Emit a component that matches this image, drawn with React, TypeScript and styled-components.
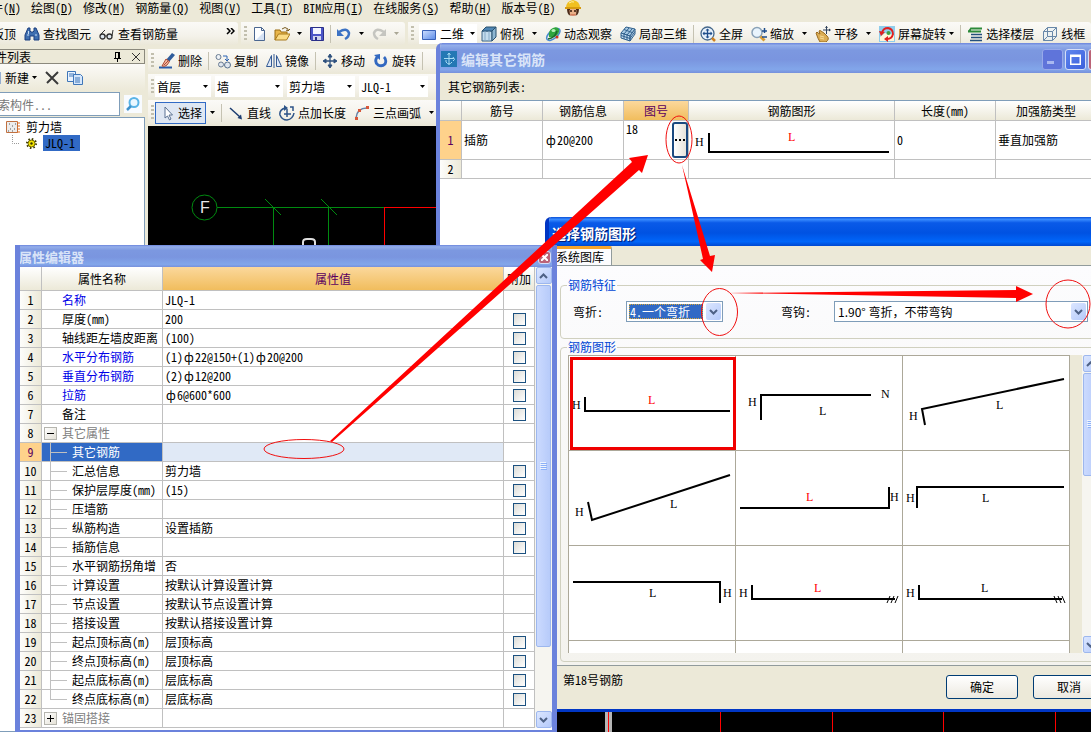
import React from 'react';
import styled, { createGlobalStyle, css } from 'styled-components';

const Global = createGlobalStyle`
  *, *::before, *::after { box-sizing: border-box; }
  body {
    margin: 0;
    background: #ece9d8;
    overflow: hidden;
  }
  body, button, input, select, table {
    font-family: "Noto Sans CJK SC", "Liberation Sans", sans-serif;
    font-size: 12px;
    line-height: 16px;
    color: #000;
    font-feature-settings: "hwid";
  }
  button, select, input { margin: 0; padding: 0; border: 0; background: none; border-radius: 0; }
  svg { display: block; flex: none; }
`;

/* ---------- main frame ---------- */

const Desktop = styled.div`
  position: relative;
  display: flex;
  flex-direction: column;
  min-height: 100vh;
  overflow: hidden;
  white-space: nowrap;
`;

const MenuBar = styled.nav`
  display: flex;
  gap: 10px;
  height: 22px;
  margin-left: -9px;
`;

const MenuItem = styled.button`
  height: 16px;
`;

const ToolbarRow = styled.div`
  display: flex;
  gap: 3px;
  margin-bottom: 4px;
`;

const Bar = styled.div<{ $gap?: number; $width?: number; $bleed?: boolean; $grow?: boolean; $height?: number }>`
  display: flex;
  align-items: center;
  gap: ${p => p.$gap ?? 8}px;
  height: ${p => p.$height ?? 23}px;
  flex: ${p => (p.$grow ? '1 0 auto' : 'none')};
  width: ${p => (p.$width ? `${p.$width}px` : 'auto')};
  margin-left: ${p => (p.$bleed ? '-8px' : '0')};
  padding-left: ${p => (p.$bleed ? '0' : '3px')};
  padding-right: 3px;
  border-radius: 0 3px 3px 0;
  background: linear-gradient(#fbfaf7, #f4f2ea 60%, #ebe8d9);
`;

const Grip = styled.span`
  width: 3px;
  height: 16px;
  margin-right: -3px;
  background: repeating-linear-gradient(#c2bfae 0 2px, transparent 2px 4px);
`;

const Sep = styled.span`
  width: 1px;
  height: 18px;
  margin: 0 -2px;
  background: #c5c2b2;
`;

const ToolButton = styled.button<{ $pressed?: boolean; $combo?: boolean }>`
  display: inline-flex;
  align-items: center;
  gap: 3px;
  height: 20px;
  ${p => p.$pressed && css`
    height: 22px;
    margin: 0 -4px;
    padding: 0 3px;
    border: 1px solid #316ac5;
    background: #dfe7f3;
  `}
  ${p => p.$combo && css`
    margin-right: -4px;
    padding: 0 2px;
    background: #fff;
  `}
`;

const Push = styled.span`
  flex: 1;
`;

const Workspace = styled.div`
  display: flex;
  flex: 1;
`;

const Dock = styled.aside`
  display: flex;
  flex-direction: column;
  width: 161px;
  margin-left: -16px;
  margin-right: 3px;
`;

const DockTitle = styled.div`
  display: flex;
  align-items: center;
  gap: 10px;
  height: 15px;
  padding: 0 4px 0 10px;
  border: 1px solid #8b897d;
`;

const DockTools = styled.div`
  display: flex;
  align-items: center;
  gap: 7px;
  height: 27px;
  padding-left: 2px;
  background: linear-gradient(#fbfaf7, #ece9d8);
`;

const SearchRow = styled.div`
  display: flex;
  align-items: center;
  gap: 4px;
  height: 26px;
`;

const SearchInput = styled.input`
  width: 136px;
  height: 24px;
  padding-left: 1px;
  border: 1px solid #7f9db9;
  background: #fff;
  &::placeholder { color: #777; }
`;

const SearchButton = styled.button`
  padding: 1px;
  background: #f8fbff;
`;

const Tree = styled.ul`
  flex: 1;
  margin: 0;
  padding: 1px 0 0 21px;
  list-style: none;
  background: #fff;
  border: 1px solid #7f9db9;
`;

const TreeRow = styled.li<{ $child?: boolean }>`
  display: flex;
  align-items: center;
  gap: 6px;
  height: 16px;
  padding-left: ${p => (p.$child ? '6px' : '0')};
`;

const TreeSelected = styled.span`
  padding: 0 5px 0 2px;
  background: #316ac5;
`;

const Main = styled.main`
  display: flex;
  flex: 1;
  flex-direction: column;
  gap: 1px;
`;

const Drawing = styled.div`
  flex: 1;
  min-height: 300px;
  background: #000;
  svg { width: 100%; height: 100%; }
`;

const ComboBox = styled.span<{ $width: number }>`
  display: flex;
  align-items: center;
  width: ${p => p.$width}px;
  height: 21px;
  padding: 0 3px 0 2px;
  background: #fff;
`;

const PlainSelect = styled.select`
  flex: 1;
  min-width: 0;
  height: 18px;
  appearance: none;
`;

/* ---------- windows ---------- */

const Window = styled.section<{ $active?: boolean }>`
  position: absolute;
  border-style: solid;
  border-color: ${p => (p.$active ? '#0036c4' : '#6b82dc')};
  border-top-left-radius: 6px;
  overflow: hidden;
`;

const EditWindow = styled(Window)`
  top: 43px;
  left: 436px;
  right: -23px;
  height: 560px;
  border-width: 0 4px 4px;
  background: #ece9d8;
`;

const PickWindow = styled(Window)`
  top: 217px;
  left: 545px;
  right: -23px;
  border-width: 0 4px 3px;
  background: #ece9d8;
`;

const PropWindow = styled(Window)`
  top: 245px;
  left: 15px;
  width: 542px;
  border-width: 0 5px 3px;
  border-radius: 0;
  background: #fff;
`;

const TitleBar = styled.header<{ $active?: boolean; $height: number; $size: number; $inset?: number }>`
  display: flex;
  align-items: center;
  gap: 2px;
  height: ${p => p.$height}px;
  margin: 0 -5px;
  padding: 2px 6px 0 ${p => p.$inset ?? 6}px;
  font-size: ${p => p.$size}px;
  font-weight: bold;
  color: ${p => (p.$active ? '#fff' : '#d9e4f8')};
  text-shadow: ${p => (p.$active ? '1px 1px 1px #00156b' : 'none')};
  background: ${p =>
    p.$active
      ? 'linear-gradient(#0a50d8, #3a8cff 8%, #0a5ae8 20%, #0052e2 55%, #0066fa 85%, #0048d0)'
      : 'linear-gradient(#6a84dc, #94aeea 8%, #7c98e0 25%, #7a95df 55%, #82a6ea 88%, #7690dc)'};
`;

const TitleText = styled.h2`
  flex: 1;
  margin: 0;
  padding-left: 2px;
  font-size: inherit;
  font-weight: bold;
  line-height: 18px;
`;

const CaptionButton = styled.button<{ $tone: 'dim' | 'blue' | 'red'; $small?: boolean }>`
  display: grid;
  place-items: center;
  width: ${p => (p.$small ? 13 : 21)}px;
  height: ${p => (p.$small ? 13 : 21)}px;
  border: 1px solid ${p => (p.$tone === 'dim' ? '#97a9ea' : '#d5def8')};
  border-radius: 3px;
  background: ${p => ({ dim: '#5f74da', blue: 'linear-gradient(135deg, #5f86ee, #3b5fdc)', red: '#bb6377' })[p.$tone]};
`;

const ListLabel = styled.p`
  margin: 0;
  padding: 6px 8px 5px;
  height: 27px;
`;

const ListArea = styled.div`
  height: 100%;
  border-top: 1px solid #7f9db9;
  background: #fff;
`;

const Grid = styled.table`
  table-layout: fixed;
  border-collapse: separate;
  border-spacing: 0;
`;

const HeadCell = styled.th<{ $hot?: boolean; $height: number }>`
  height: ${p => p.$height}px;
  padding: 0;
  overflow: hidden;
  font-weight: normal;
  border-right: 1px solid #c0c0c0;
  border-bottom: 1px solid #c0c0c0;
  color: ${p => (p.$hot ? '#5a0060' : '#000')};
  background: ${p => (p.$hot ? 'linear-gradient(#fbd89c, #f1bd5d)' : 'linear-gradient(#fff, #ece9d8)')};
`;

const RowHead = styled.th<{ $hot?: boolean }>`
  padding: 0;
  font-weight: normal;
  border-right: 1px solid #c0c0c0;
  border-bottom: 1px solid #c0c0c0;
  color: ${p => (p.$hot ? '#5a0060' : '#000')};
  background: ${p => (p.$hot ? '#fed28b' : 'linear-gradient(90deg, #fdfdfb, #ece9d8)')};
`;

const Cell = styled.td<{ $height: number; $tint?: string; $pad?: number }>`
  height: ${p => p.$height}px;
  padding: 0 0 0 ${p => p.$pad ?? 2}px;
  overflow: hidden;
  border-right: 1px solid #c0c0c0;
  border-bottom: 1px solid #c0c0c0;
  background: ${p => p.$tint ?? '#fff'};
`;

const CheckCell = styled(Cell)`
  padding: 1px 0 0;
  text-align: center;
`;

const Check = styled.input`
  display: block;
  appearance: none;
  width: 13px;
  height: 13px;
  margin: 0 auto;
  border: 1px solid #1c5180;
  background: linear-gradient(135deg, #dcdcd7, #fff);
`;

const Grade = styled.span`
  display: inline-block;
  width: 12px;
  text-align: center;
`;

const NumberEdit = styled.div`
  display: flex;
  justify-content: space-between;
  height: 38px;
`;

const DotsButton = styled.button`
  display: grid;
  place-items: center;
  width: 16px;
  height: 36px;
  margin-top: 1px;
  border: 2px solid #1b4a80;
  border-radius: 3px;
  background: linear-gradient(90deg, #fff, #e6e3da);
`;

const PropBody = styled.div`
  display: flex;
  padding-bottom: 2px;
`;

const NameLine = styled.div<{ $kind: Kind; $selected?: boolean; $key?: boolean; $last?: boolean }>`
  position: relative;
  display: flex;
  align-items: center;
  gap: 5px;
  height: 18px;
  padding-left: ${p => ({ plain: 20, child: 30, group: 2 })[p.$kind]}px;
  color: ${p => (p.$selected ? '#fff' : p.$key ? '#0000e8' : p.$kind === 'group' ? '#808080' : '#000')};
  ${p => p.$kind === 'child' && css`
    &::before {
      content: '';
      position: absolute;
      left: 8px;
      top: -1px;
      height: ${p.$last ? '10px' : '19px'};
      border-left: 1px solid #c0c0c0;
    }
    &::after {
      content: '';
      position: absolute;
      left: 8px;
      top: 9px;
      width: 17px;
      border-top: 1px solid #c0c0c0;
    }
  `}
`;

const Expander = styled.button`
  display: grid;
  place-items: center;
  width: 13px;
  height: 13px;
  border: 1px solid #b5b5ae;
  background: linear-gradient(135deg, #fff, #e4e1d6);
`;

const ScrollTrack = styled.div`
  display: flex;
  flex-direction: column;
  align-items: center;
  gap: 1px;
  width: 17px;
  flex: none;
  background: #f6f5f0;
`;

const ScrollButton = styled.button`
  display: grid;
  place-items: center;
  width: 16px;
  height: 17px;
  flex: none;
  border: 1px solid #9db7ee;
  border-radius: 2px;
  background: linear-gradient(135deg, #dbe6ff, #b5cafa);
`;

const ScrollThumb = styled.div<{ $share: number }>`
  display: grid;
  place-items: center;
  flex: ${p => p.$share} 0 0;
  width: 15px;
  border: 1px solid #9db7ee;
  border-radius: 2px;
  background: linear-gradient(90deg, #cbdafe, #b7cbfa);
`;

const ScrollRest = styled.div<{ $share: number }>`
  flex: ${p => p.$share} 0 0;
`;

const TabStrip = styled.div`
  display: flex;
  height: 19px;
`;

const Tab = styled.button`
  width: 63px;
  padding: 0 0 0 7px;
  text-align: left;
  border-top: 3px solid #f5a52c;
  border-right: 1px solid #919b9c;
  border-radius: 2px 2px 0 0;
  background: #fcfcfe;
`;

const TabPanel = styled.div`
  display: flex;
  flex-direction: column;
  gap: 1px;
  padding: 12px 4px 3px 11px;
  border-top: 1px solid #919b9c;
  border-bottom: 1px solid #919b9c;
  background: linear-gradient(#fcfcfe, #f4f3ee);
`;

const Group = styled.fieldset`
  margin: 0;
  min-width: 0;
  padding: 0;
  border: 1px solid #d0d0bf;
  border-radius: 4px;
  legend {
    height: 14px;
    line-height: 14px;
    margin-left: 6px;
    padding: 0 1px;
    color: #0046d5;
  }
`;

const FieldRow = styled.div`
  display: flex;
  gap: 58px;
  padding: 9px 0 16px 12px;
`;

const Field = styled.label`
  display: flex;
  align-items: center;
  gap: 23px;
`;

const XpSelectBox = styled.span<{ $width: number }>`
  display: flex;
  align-items: center;
  gap: 3px;
  width: ${p => p.$width}px;
  height: 21px;
  padding: 1px;
  border: 1px solid #7f9db9;
  background: #fff;
`;

const XpSelect = styled.select<{ $focused?: boolean }>`
  flex: 1;
  min-width: 0;
  height: 15px;
  margin-left: 1px;
  padding-left: 1px;
  line-height: 15px;
  appearance: none;
  ${p => p.$focused && css`
    color: #fff;
    background: #316ac5;
    outline: 1px dotted #d8a838;
    outline-offset: -1px;
  `}
  ${p => !p.$focused && css`
    font-feature-settings: normal;
  `}
`;

const DropGlyph = styled.span`
  display: grid;
  place-items: center;
  width: 15px;
  height: 17px;
  border-radius: 2px;
  background: linear-gradient(135deg, #dbe6ff, #b5cafa);
`;

const Gallery = styled.div`
  display: flex;
  gap: 12px;
  height: 298px;
  margin: 1px 0 8px 7px;
  overflow: hidden;
  background: #ece9d8;
`;

const ShapeGrid = styled.div`
  display: grid;
  grid-template-columns: repeat(3, 167px);
  grid-auto-rows: 95px;
  border-left: 1px solid #aca899;
  border-top: 1px solid #aca899;
`;

const ShapeCell = styled.button<{ $selected?: boolean }>`
  position: relative;
  border-right: 1px solid #aca899;
  border-bottom: 1px solid #aca899;
  background: #fff;
  ${p => p.$selected && css`
    &::after {
      content: '';
      position: absolute;
      inset: 1px -1px 0 1px;
      border: 3px solid #f00000;
    }
  `}
`;

const Footer = styled.footer`
  display: flex;
  gap: 15px;
  height: 43px;
  padding: 6px 5px 0 14px;
`;

const FooterText = styled.p`
  flex: 1;
  margin: 0;
`;

const PushButton = styled.button`
  width: 72px;
  height: 24px;
  margin-top: 3px;
  border: 1px solid #003c74;
  border-radius: 3px;
  background: linear-gradient(#fff, #ece9e0);
`;

const Marks = styled.svg`
  position: absolute;
  inset: 0;
  width: 100%;
  height: 100%;
  pointer-events: none;
`;

/* ---------- icons ---------- */

const Icon = ({ children }: { children: React.ReactNode }) => (
  <svg width="16" height="16" viewBox="0 0 16 16" fill="none" aria-hidden="true">{children}</svg>
);

const Tri = ({ dim }: { dim?: boolean }) => (
  <svg width="5" height="3" viewBox="0 0 5 3" aria-hidden="true"><path d="M0 0h5L2.500 3z" fill={dim ? '#aaa795' : '#000'} /></svg>
);

const Chevron = ({ up }: { up?: boolean }) => (
  <svg width="9" height="6" viewBox="0 0 9 6" fill="none" aria-hidden="true">
    <path d={up ? 'M1 5l3.500-3.500L8 5' : 'M1 1l3.500 3.500L8 1'} stroke="#4d6185" strokeWidth="2" />
  </svg>
);

const Worker = () => (
  <Icon>
    <circle cx="8" cy="10.500" r="5" fill="#e8b088" />
    <path d="M2 8q0 7 3 7.500L4.500 10h7l-.5 5.500q3-.5 3-7.500z" fill="#4a2a18" />
    <path d="M5 9h6v4q-3 3-6 0z" fill="#e8b088" />
    <path d="M1 8Q1 1 8 0q7 1 7 8z" fill="#f0c020" />
    <path d="M0 7h16v2H0z" fill="#d89c10" />
    <path d="M4 3q3-2 5-1" stroke="#fff3a0" />
    <path d="M6 10v2M10 10v2" stroke="#301808" strokeWidth="1.500" />
    <path d="M5 15h6" stroke="#c05030" />
  </Icon>
);
const Binoculars = () => (
  <Icon>
    <path d="M4 2h2v3l1 1h2l1-1V2h2l3 7v5h-5v-4H6v4H1V9z" fill="#3f6fb0" stroke="#1b3f80" />
    <path d="M3 9h2M11 9h2M4.500 5v3" stroke="#c8dcf5" />
  </Icon>
);
const Glasses = () => (
  <Icon>
    <circle cx="3.500" cy="10.500" r="2.500" stroke="#333" strokeWidth="1.300" fill="#dde6ee" />
    <circle cx="10.500" cy="10.500" r="2.500" stroke="#333" strokeWidth="1.300" fill="#dde6ee" />
    <path d="M6 10h2M13 10l1-6M2 8l4-4" stroke="#333" />
  </Icon>
);
const NewFile = () => (
  <Icon>
    <path d="M3.500 1.500h7l3 3v10h-10z" fill="#fdfeff" stroke="#4a6690" />
    <path d="M10.500 1.500v3h3" stroke="#4a6690" />
    <path d="M5 14l8-8v8z" fill="#d5e2f4" />
  </Icon>
);
const OpenFolder = () => (
  <Icon>
    <path d="M1 14V4h5l1 2h6v3H5z" fill="#e9b64a" stroke="#9a6c12" />
    <path d="M1 14L4.500 8H16l-3.500 6z" fill="#fbdc85" stroke="#a87a1c" />
    <path d="M8 3q3-3 6 0v2M14 5l-2-1M14 5l2-2" stroke="#7a5c20" />
  </Icon>
);
const Save = () => (
  <Icon>
    <path d="M1.500 1.500h13v13h-12l-1-1z" fill="#4b55c8" stroke="#2a2f88" />
    <path d="M4 2h8v6H4z" fill="#f3f5ff" />
    <path d="M4 10h8v4H4z" fill="#cfd4ec" />
    <path d="M6 11h2v3H6z" fill="#2a2f88" />
  </Icon>
);
const Undo = () => (
  <Icon>
    <path d="M3 6q8-5 10 1 0 4-4 6" stroke="#3c72c4" strokeWidth="2.500" />
    <path d="M1 3v7h7z" fill="#3c72c4" />
  </Icon>
);
const Redo = () => (
  <Icon>
    <path d="M13 6Q5 1 3 7q0 4 4 6" stroke="#c5c5c0" strokeWidth="2.500" />
    <path d="M15 3v7H8z" fill="#c5c5c0" />
  </Icon>
);
const Flat = () => (
  <Icon>
    <path d="M1.500 4.500h13v9h-13z" fill="url(#flat)" stroke="#3a62b8" />
    <defs><linearGradient id="flat" x2="1" y2="1"><stop stopColor="#cfdfff" /><stop offset="1" stopColor="#5b8be8" /></linearGradient></defs>
  </Icon>
);
const TopView = () => (
  <Icon>
    <path d="M1 5h10v10H1z" fill="#c4ddee" stroke="#3b6384" />
    <path d="M1 5l4-4h10l-4 4z" fill="#4f86b4" stroke="#28506f" />
    <path d="M11 5l4-4v10l-4 4z" fill="#8db6d2" stroke="#28506f" />
    <path d="M4 5v10M8 5v10" stroke="#86aac6" />
  </Icon>
);
const Orbit = () => (
  <Icon>
    <ellipse cx="8" cy="8.500" rx="8" ry="4" transform="rotate(-40 8 8)" stroke="#4a8ad0" strokeWidth="1.500" />
    <path d="M4 11Q3 4 8 2q4-2 6 1 1 4-3 7-3 2-7 1z" fill="#2fa53e" />
    <path d="M3 13q7-1 9-8" stroke="#1b6a2c" strokeWidth="1.500" />
    <ellipse cx="8.500" cy="4.500" rx="2" ry="1.500" fill="#b8f0b8" />
    <circle cx="12" cy="11" r="1.500" fill="#d03020" />
  </Icon>
);
const Local3d = () => (
  <Icon>
    <path d="M1 7l5-6 9 2-5 7z" fill="#a8cae4" stroke="#2f5f8c" />
    <path d="M1 7v5l9 3V10zM10 15l5-7V3l-5 7z" fill="#c3dcf0" stroke="#2f5f8c" />
    <path d="M4 3.500l8 3M9 2L4 8v5M12 3L7 9v5M1 9.500l9 3 5-7" stroke="#2f5f8c" />
  </Icon>
);
const FitAll = () => (
  <Icon>
    <circle cx="7.500" cy="7.500" r="6.500" fill="#e8f2fc" stroke="#46688c" strokeWidth="1.300" />
    <path d="M7.500 3v9M3 7.500h9" stroke="#1f4e8c" strokeWidth="1.300" />
    <path d="M5.500 4.500l2-2 2 2zM5.500 10.500l2 2 2-2zM4.500 5.500l-2 2 2 2zM10.500 5.500l2 2-2 2z" fill="#1f4e8c" />
    <path d="M12 12l3 3" stroke="#d08020" strokeWidth="2.500" />
  </Icon>
);
const Zoom = () => (
  <Icon>
    <circle cx="6" cy="6.500" r="5" fill="#e9f4fd" stroke="#8aa2b8" strokeWidth="1.500" />
    <path d="M9.500 10.500l4 4" stroke="#d89a30" strokeWidth="3" />
    <path d="M11 5h5M13.500 2v5M11 11h5" stroke="#1c4c8c" strokeWidth="1.500" />
  </Icon>
);
const Pan = () => (
  <Icon>
    <path d="M1 7q1-2 2 0l2 1-1-3q1-1 2 0l3 2 3 3q3 3-1 6H5q-2-3-4-9z" fill="#dcae55" stroke="#9b6c20" />
    <path d="M5 10l4 1M5 12l4 1" stroke="#f8dc98" />
    <path d="M11.500 0v8M8 4h7" stroke="#30425c" />
    <path d="M10 2l1.500-2L13 2zM14 2.500L16 4l-2 1.500z" fill="#30425c" />
  </Icon>
);
const ScreenSpin = () => (
  <Icon>
    <path d="M0 0h16v16H0z" fill="#8fcdec" />
    <path d="M1 11l5-4 9 2v6H1z" fill="#fff5d8" />
    <circle cx="9.500" cy="7" r="2" fill="#3fa040" />
    <path d="M3 7q1-5 6-5 5 1 5 6-1 5-6 5" stroke="#e02020" strokeWidth="1.800" />
    <path d="M0 5l2 5 4-4zM9 10v6l-4-3z" fill="#e02020" />
  </Icon>
);
const Floors = () => (
  <Icon>
    <path d="M4 2.500h11M1 5.500h13" stroke="#2c8a3a" strokeWidth="2" />
    <path d="M4 8.500h11M4 11.500h11M3 14.500h12" stroke="#24507c" strokeWidth="1.500" />
    <path d="M1 5l3-4v4z" fill="#2c8a3a" />
  </Icon>
);
const Wire = () => (
  <Icon>
    <path d="M1.500 5.500l4-4h9v9l-4 4h-9zM1.500 5.500h9v9M10.500 5.500l4-4M5.500 1.500v9h9M1.500 14.500l4-4" stroke="#6787a8" fill="#e6eff8" fillOpacity=".5" />
  </Icon>
);
const Brush = () => (
  <Icon>
    <path d="M0 14.500h13" stroke="#2b5ca8" strokeWidth="2" />
    <path d="M13 0l3 2-6 7-3-2z" fill="#2f5c9c" />
    <path d="M7 6l3.500 2.500L8 12q-2 2-5 1z" fill="#f0b8a0" stroke="#b04a34" />
    <path d="M5 12l4-4" stroke="#b04a34" />
  </Icon>
);
const CopyShape = () => (
  <Icon>
    <circle cx="3.500" cy="4" r="2.500" stroke="#6a7c92" fill="#eef2f6" />
    <circle cx="6" cy="11.500" r="2.500" stroke="#6a7c92" fill="#dfe6ee" />
    <circle cx="12.500" cy="12" r="3" stroke="#56708e" fill="#dfe6ee" />
    <path d="M8 3h4v4M10 6l2 2 2-2" stroke="#2b62b4" />
  </Icon>
);
const Mirror = () => (
  <Icon>
    <path d="M5.500 2.500v11h-5zM10.500 2.500v11h5z" fill="#dfe9f7" stroke="#345a94" />
    <path d="M8 1v14" stroke="#345a94" />
  </Icon>
);
const Move = () => (
  <Icon>
    <path d="M8 2v12M2 8h12" stroke="#2f517e" strokeWidth="1.300" />
    <path d="M6 4l2-3 2 3zM6 12l2 3 2-3zM4 6L1 8l3 2zM12 6l3 2-3 2z" fill="#2f517e" stroke="#2f517e" />
  </Icon>
);
const Rotate = () => (
  <Icon>
    <path d="M4 4q-3 5 1 8 4 2 7-1 2-4-1-7" stroke="#3268c0" strokeWidth="2.800" />
    <path d="M1 2l6-1v6z" fill="#3268c0" />
  </Icon>
);
const Pointer = () => (
  <Icon><path d="M6 2v11l2.500-2 2 4 1.500-1-2-4h3.500z" fill="#fff" stroke="#5a7192" /></Icon>
);
const Diagonal = () => (
  <Icon>
    <path d="M2 3l10 9" stroke="#1c3c70" strokeWidth="1.500" />
    <path d="M14 14.500L9.500 13 13 9.500z" fill="#1c3c70" />
  </Icon>
);
const PointLen = () => (
  <Icon>
    <path d="M6 3Q0 5 1 10q2 5 7 5 6-1 7-7" stroke="#2c5388" strokeWidth="1.500" />
    <path d="M8 4v8M5 9h7M11 2h3v4" stroke="#2c5388" strokeWidth="1.500" />
    <path d="M5 0l4 3-4 3z" fill="#2c5388" />
  </Icon>
);
const Arc = () => (
  <Icon>
    <path d="M2 13Q3 3 13 3" stroke="#6682a6" strokeWidth="1.500" />
    <path d="M1 12h3v3H1zM4 4h3v3H4zM12 1h3v3h-3z" fill="#d8573a" />
  </Icon>
);
const Cross = () => (
  <Icon><path d="M2 2l12 12M14 2L3 13" stroke="#3a3a3a" strokeWidth="2" /></Icon>
);
const Pages = () => (
  <Icon>
    <path d="M.5 1.500h8v10h-8z" fill="#eaf3ff" stroke="#3f76b8" />
    <path d="M6.500 4.500h7l2 2v8h-9z" fill="#d5e6fb" stroke="#3f76b8" />
    <path d="M2 4h5M2 6h4M8 8h5M8 10h5M8 12h5" stroke="#3f76b8" />
  </Icon>
);
const Pin = () => (
  <svg width="9" height="10" viewBox="0 0 9 10" fill="none" aria-hidden="true">
    <path d="M2.500 1v5M2 .5h5M6 1v5M1 6.500h7M4.500 7v3" stroke="#000" />
    <path d="M5 1h2v5H5z" fill="#000" />
  </svg>
);
const Close = () => (
  <svg width="8" height="8" viewBox="0 0 8 8" aria-hidden="true"><path d="M0 0l8 8M8 0L0 8" stroke="#333" /></svg>
);
const Lens = () => (
  <Icon>
    <circle cx="9" cy="6.500" r="4.500" stroke="#5ab4e6" strokeWidth="2" fill="#eaf7ff" />
    <path d="M6 10l-4 4" stroke="#3f92cc" strokeWidth="2.500" />
  </Icon>
);
const WallIcon = () => (
  <svg width="14" height="14" viewBox="0 0 14 14" fill="none" aria-hidden="true">
    <path d="M.5 1.500h11v11H.5z" fill="#ececec" stroke="#c07040" />
    <path d="M3 4h1M6 6h1M9 4h1M4 9h1M8 9h1M2 11h1M6 11h1" stroke="#555" />
    <path d="M11 3h3M11 6h3M11 9h3M11 12h3" stroke="#e06a1c" />
  </svg>
);
const Gear = () => (
  <svg width="11" height="11" viewBox="0 0 11 11" fill="none" aria-hidden="true">
    <circle cx="5.500" cy="5.500" r="4.500" stroke="#3c3800" strokeWidth="2" strokeDasharray="1.500 2" />
    <circle cx="5.500" cy="5.500" r="3.500" fill="#f4e400" stroke="#6a6200" />
    <circle cx="5.500" cy="5.500" r="1.200" fill="#3c3800" />
  </svg>
);
const AppBadge = () => (
  <svg width="16" height="16" viewBox="0 0 16 16" fill="none" aria-hidden="true">
    <path d="M0 0h16v16H0z" fill="#2478b4" />
    <path d="M8 2v12M3 7.500h10M5 11q3 4 6 0M5 11V9M6.500 4L8 2l1.500 2M12 6q3 3 0 4" stroke="#a8dcf4" />
  </svg>
);
const ThumbLines = () => (
  <svg width="7" height="8" viewBox="0 0 7 8" aria-hidden="true">
    <path d="M0 .5h6M0 2.500h6M0 4.500h6M0 6.500h6" stroke="#eef4fe" />
    <path d="M1 1.500h6M1 3.500h6M1 5.500h6M1 7.500h6" stroke="#8cb0f8" />
  </svg>
);

/* ---------- data ---------- */

type Kind = 'plain' | 'child' | 'group';
type Row = { name: string; value?: string; kind?: Kind; key?: boolean; check?: boolean; open?: boolean };

const rows: Row[] = [
  { name: '名称', value: 'JLQ-1', key: true },
  { name: '厚度(mm)', value: '200', check: true },
  { name: '轴线距左墙皮距离', value: '(100)', check: true },
  { name: '水平分布钢筋', value: '(1)ф22@150+(1)ф20@200', key: true, check: true },
  { name: '垂直分布钢筋', value: '(2)ф12@200', key: true, check: true },
  { name: '拉筋', value: 'ф6@600*600', key: true, check: true },
  { name: '备注', check: true },
  { name: '其它属性', kind: 'group', open: true },
  { name: '其它钢筋', kind: 'child' },
  { name: '汇总信息', value: '剪力墙', kind: 'child', check: true },
  { name: '保护层厚度(mm)', value: '(15)', kind: 'child', check: true },
  { name: '压墙筋', kind: 'child', check: true },
  { name: '纵筋构造', value: '设置插筋', kind: 'child', check: true },
  { name: '插筋信息', kind: 'child', check: true },
  { name: '水平钢筋拐角增', value: '否', kind: 'child' },
  { name: '计算设置', value: '按默认计算设置计算', kind: 'child' },
  { name: '节点设置', value: '按默认节点设置计算', kind: 'child' },
  { name: '搭接设置', value: '按默认搭接设置计算', kind: 'child' },
  { name: '起点顶标高(m)', value: '层顶标高', kind: 'child', check: true },
  { name: '终点顶标高(m)', value: '层顶标高', kind: 'child', check: true },
  { name: '起点底标高(m)', value: '层底标高', kind: 'child', check: true },
  { name: '终点底标高(m)', value: '层底标高', kind: 'child', check: true },
  { name: '锚固搭接', kind: 'group' },
];
const SELECTED_ROW = 8;

type Mark = [text: string, x: number, y: number, red?: boolean];
type Shape = { path: string; hatch?: string; marks: Mark[] };

const shapes: Shape[] = [
  { path: 'M16 41V55H161', marks: [['H', 3, 53], ['L', 79, 48, true]] },
  { path: 'M25 64V39H135', marks: [['H', 12, 50], ['N', 145, 42], ['L', 83, 59]] },
  { path: 'M22 69L19 53L161 23', marks: [['H', 6, 64], ['L', 93, 53]] },
  { path: 'M19 51L23 69L161 24', marks: [['H', 6, 65], ['L', 101, 57]] },
  { path: 'M4 57H153V36', marks: [['L', 70, 50, true], ['H', 154, 50]] },
  { path: 'M14 57V36H161', marks: [['H', 3, 51], ['L', 79, 51]] },
  { path: 'M4 36H151V57', marks: [['L', 80, 51], ['H', 154, 51]] },
  { path: 'M16 39V53H159', hatch: 'M151 57l3-7M155 57l3-7M159 57l3-7', marks: [['H', 3, 51], ['L', 78, 46, true]] },
  { path: 'M16 39V53H159', hatch: 'M151 50l3 7M155 50l3 7M159 50l3 7', marks: [['H', 3, 51], ['L', 78, 46]] },
];

const markFont = '"Liberation Serif", serif';

const ShapeDrawing = ({ shape, width, height }: { shape: Shape; width: number; height: number }) => (
  <svg width={width} height={height} viewBox={`0 0 ${width} ${height}`} fill="none">
    <path d={shape.path} stroke="#000" strokeWidth="2" />
    {shape.hatch && <path d={shape.hatch} stroke="#000" />}
    {shape.marks.map(([t, x, y, red]) => (
      <text key={t} x={x} y={y} fontFamily={markFont} fontSize="12" fill={red ? '#f00' : '#000'}>{t}</text>
    ))}
  </svg>
);

/* Steel grade signs take a full character cell. */
const Spec = ({ text = '' }: { text?: string }) => (
  <>{text.split('ф').map((part, i) => <React.Fragment key={i}>{i > 0 && <Grade>ф</Grade>}{part}</React.Fragment>)}</>
);

const Menus = ['件(N)', '绘图(D)', '修改(M)', '钢筋量(Q)', '视图(V)', '工具(T)', 'BIM应用(I)', '在线服务(S)', '帮助(H)', '版本号(B)'];

const MenuLabel = ({ text }: { text: string }) => {
  const i = text.indexOf('(') + 1;
  return <>{text.slice(0, i)}<u>{text[i]}</u>{text.slice(i + 1)}</>;
};

/* ---------- sections ---------- */

const TopBars = () => (
  <>
    <MenuBar>
      {Menus.map(m => <MenuItem key={m}><MenuLabel text={m} /></MenuItem>)}
      <Worker />
    </MenuBar>
    <ToolbarRow>
      <Bar $bleed $width={246}>
        <ToolButton>板顶</ToolButton>
        <ToolButton><Binoculars />查找图元</ToolButton>
        <ToolButton><Glasses />查看钢筋量</ToolButton>
        <Push />
        <svg width="9" height="12" viewBox="0 0 9 12" fill="none"><path d="M1 0l3 3-3 3M5 0l3 3-3 3" stroke="#000" strokeWidth="1.500" /></svg>
      </Bar>
      <Bar $gap={7} $width={164}>
        <Grip />
        <ToolButton aria-label="新建"><NewFile /></ToolButton>
        <ToolButton aria-label="打开"><OpenFolder /></ToolButton>
        <Tri />
        <ToolButton aria-label="保存"><Save /></ToolButton>
        <Sep />
        <ToolButton aria-label="撤销"><Undo /></ToolButton>
        <Tri />
        <ToolButton aria-label="恢复"><Redo /></ToolButton>
        <Tri dim />
      </Bar>
      <Bar $grow>
        <Grip />
        <ToolButton $combo><Flat />二维<Push /><Tri /></ToolButton>
        <ToolButton><TopView />俯视</ToolButton>
        <Tri />
        <ToolButton><Orbit />动态观察</ToolButton>
        <ToolButton><Local3d />局部三维</ToolButton>
        <Sep />
        <ToolButton><FitAll />全屏</ToolButton>
        <ToolButton><Zoom />缩放</ToolButton>
        <Tri />
        <ToolButton><Pan />平移</ToolButton>
        <Tri />
        <ToolButton><ScreenSpin />屏幕旋转<Tri /></ToolButton>
        <Sep />
        <ToolButton><Floors />选择楼层</ToolButton>
        <ToolButton><Wire />线框</ToolButton>
      </Bar>
    </ToolbarRow>
  </>
);

const ComponentDock = () => (
  <Dock>
    <DockTitle>件列表<Push /><Pin /><Close /></DockTitle>
    <DockTools>
      <ToolButton>
        <Icon><path d="M1 2h13v12H1z" fill="#dbe8fb" stroke="#3a6cc0" /><path d="M8 8h6v6H8z" fill="#3a6cc0" /></Icon>
        新建<Tri />
      </ToolButton>
      <ToolButton aria-label="删除"><Cross /></ToolButton>
      <ToolButton aria-label="复制"><Pages /></ToolButton>
    </DockTools>
    <SearchRow>
      <SearchInput aria-label="搜索构件" placeholder="搜索构件..." />
      <SearchButton aria-label="搜索"><Lens /></SearchButton>
    </SearchRow>
    <Tree>
      <TreeRow><WallIcon />剪力墙</TreeRow>
      <TreeRow $child>
        <svg width="8" height="16" viewBox="0 0 8 16"><path d="M.5 0v8.500H8" fill="none" stroke="#999" strokeDasharray="1 1" /></svg>
        <Gear />
        <TreeSelected>JLQ-1</TreeSelected>
      </TreeRow>
    </Tree>
  </Dock>
);

const ToolCombo = ({ width, value, label }: { width: number; value: string; label: string }) => (
  <ComboBox $width={width}>
    <PlainSelect aria-label={label}><option>{value}</option></PlainSelect>
    <Tri />
  </ComboBox>
);

const Canvas = () => (
  <Drawing>
    <svg fill="none" aria-hidden="true">
      <g stroke="#008a10">
        <circle cx="56.500" cy="81.500" r="12.500" />
        <path d="M69 81.500h167M125.500 81.500V300M180.500 81.500V300M117 73l16 16M173 73l16 16" />
      </g>
      <path d="M236 81.500h60M236.500 81.500V300" stroke="#f00" />
      <path d="M155 122v-6q0-3 4-3h4q4 0 4 3v6" stroke="#ddd" strokeWidth="2" />
      <path d="M457 560h7v60h-7z" fill="#b5b5b5" />
      <path d="M460.500 560v60M572.500 560v60M684.500 560v60M795.500 560v60M907.500 560v60" stroke="#f00" />
      <text x="52" y="87" fontFamily='"Liberation Sans", sans-serif' fontSize="16" fill="#e6e6e6">F</text>
    </svg>
  </Drawing>
);

const EditDialog = () => (
  <EditWindow aria-label="编辑其它钢筋">
    <TitleBar $height={30} $size={14}>
      <AppBadge />
      <TitleText>编辑其它钢筋</TitleText>
      <CaptionButton $tone="dim" aria-label="最小化"><svg width="11" height="11"><path d="M0 7h7v3H0z" fill="#a9b8f0" /></svg></CaptionButton>
      <CaptionButton $tone="blue" aria-label="最大化"><svg width="11" height="11"><path d="M.5 1.500h10v9H.5zM0 2h11" fill="none" stroke="#fff" strokeWidth="2" /></svg></CaptionButton>
      <CaptionButton $tone="red" aria-label="关闭" />
    </TitleBar>
    <ListLabel>其它钢筋列表:</ListLabel>
    <ListArea>
      <Grid style={{ width: 657 }}>
        <colgroup>
          {[22, 81, 81, 65, 206, 101, 101].map((w, i) => <col key={i} style={{ width: w }} />)}
        </colgroup>
        <thead>
          <tr>
            {['', '筋号', '钢筋信息', '图号', '钢筋图形', '长度(mm)', '加强筋类型'].map(h => (
              <HeadCell key={h} $height={20} $hot={h === '图号'}>{h}</HeadCell>
            ))}
          </tr>
        </thead>
        <tbody>
          <tr>
            <RowHead $hot>1</RowHead>
            <Cell $height={39}>插筋</Cell>
            <Cell $height={39}><Spec text="ф20@200" /></Cell>
            <Cell $height={39}>
              <NumberEdit>18<DotsButton aria-label="选择图号"><svg width="10" height="2"><path d="M0 0h2v2H0zM4 0h2v2H4zM8 0h2v2H8z" /></svg></DotsButton></NumberEdit>
            </Cell>
            <Cell $height={39} $pad={0}>
              <ShapeDrawing width={205} height={38} shape={{ path: 'M20 12V31H200', marks: [['H', 6, 25], ['L', 99, 20, true]] }} />
            </Cell>
            <Cell $height={39}>0</Cell>
            <Cell $height={39}>垂直加强筋</Cell>
          </tr>
          <tr>
            <RowHead>2</RowHead>
            {[1, 2, 3, 4, 5, 6].map(i => <Cell key={i} $height={19} />)}
          </tr>
        </tbody>
      </Grid>
    </ListArea>
  </EditWindow>
);

const PickDialog = () => (
  <PickWindow $active aria-label="选择钢筋图形">
    <TitleBar $active $height={29} $size={14}><TitleText>选择钢筋图形</TitleText></TitleBar>
    <TabStrip><Tab>系统图库</Tab></TabStrip>
    <TabPanel>
      <Group>
        <legend>钢筋特征</legend>
        <FieldRow>
          <Field>弯折:
            <XpSelectBox $width={97}>
              <XpSelect $focused><option>4.一个弯折</option></XpSelect>
              <DropGlyph><Chevron /></DropGlyph>
            </XpSelectBox>
          </Field>
          <Field>弯钩:
            <XpSelectBox $width={254}>
              <XpSelect><option>1.90° 弯折，不带弯钩</option></XpSelect>
              <DropGlyph><Chevron /></DropGlyph>
            </XpSelectBox>
          </Field>
        </FieldRow>
      </Group>
      <Group>
        <legend>钢筋图形</legend>
        <Gallery>
          <ShapeGrid>
            {shapes.map((s, i) => (
              <ShapeCell key={i} $selected={i === 0} aria-label={`图形 ${i + 1}`}>
                <ShapeDrawing shape={s} width={166} height={94} />
              </ShapeCell>
            ))}
            <ShapeCell /><ShapeCell /><ShapeCell />
          </ShapeGrid>
          <ScrollTrack>
            <ScrollButton aria-label="向上"><Chevron up /></ScrollButton>
            <ScrollThumb $share={102}><ThumbLines /></ScrollThumb>
            <ScrollRest $share={160} />
            <ScrollButton aria-label="向下"><Chevron /></ScrollButton>
          </ScrollTrack>
        </Gallery>
      </Group>
    </TabPanel>
    <Footer>
      <FooterText>第18号钢筋</FooterText>
      <PushButton>确定</PushButton>
      <PushButton>取消</PushButton>
    </Footer>
  </PickWindow>
);

const PropertyEditor = () => (
  <PropWindow aria-label="属性编辑器">
    <TitleBar $height={22} $size={13} $inset={2}>
      <TitleText>属性编辑器</TitleText>
      <CaptionButton $small $tone="red" aria-label="关闭">
        <svg width="7" height="7" viewBox="0 0 7 7"><path d="M0 0l7 7M7 0L0 7" stroke="#fff" strokeWidth="2" /></svg>
      </CaptionButton>
    </TitleBar>
    <PropBody>
      <Grid style={{ width: 515 }}>
        <colgroup>
          {[22, 121, 341, 31].map(w => <col key={w} style={{ width: w }} />)}
        </colgroup>
        <thead>
          <tr>
            {['', '属性名称', '属性值', '附加'].map(h => (
              <HeadCell key={h} $height={24} $hot={h === '属性值'}>{h}</HeadCell>
            ))}
          </tr>
        </thead>
        <tbody>
          {rows.map((r, i) => {
            const selected = i === SELECTED_ROW;
            const kind = r.kind ?? 'plain';
            return (
              <tr key={r.name}>
                <RowHead $hot={selected}>{i + 1}</RowHead>
                <Cell $height={19} $pad={0} $tint={selected ? '#316ac5' : undefined}>
                  <NameLine $kind={kind} $selected={selected} $key={r.key} $last={i === 21}>
                    {kind === 'group' && (
                      <Expander aria-label={r.open ? '收起' : '展开'}>
                        <svg width="7" height="7"><path d={r.open ? 'M0 3.500h7' : 'M0 3.500h7M3.500 0v7'} stroke="#000" /></svg>
                      </Expander>
                    )}
                    {r.name}
                  </NameLine>
                </Cell>
                <Cell $height={19} $tint={selected ? '#e0e9f6' : undefined}><Spec text={r.value} /></Cell>
                <CheckCell $height={19}>{r.check && <Check type="checkbox" aria-label={`附加 ${r.name}`} />}</CheckCell>
              </tr>
            );
          })}
        </tbody>
      </Grid>
      <ScrollTrack>
        <ScrollButton aria-label="向上"><Chevron up /></ScrollButton>
        <ScrollThumb $share={362}><ThumbLines /></ScrollThumb>
        <ScrollRest $share={62} />
        <ScrollButton aria-label="向下"><Chevron /></ScrollButton>
      </ScrollTrack>
    </PropBody>
  </PropWindow>
);

const Annotations = () => (
  <Marks fill="none" aria-hidden="true">
    <g stroke="#f01010">
      <ellipse cx="304" cy="449" rx="40" ry="9.500" />
      <ellipse cx="679" cy="139.500" rx="13" ry="23.500" />
      <ellipse cx="719.500" cy="312" rx="18" ry="23.500" />
      <ellipse cx="1068" cy="304" rx="22" ry="24" />
    </g>
    <g fill="#f00">
      <path d="M330 441L632 162l-3-4 19-3-6 18-3-3L332 442z" />
      <path d="M682 165l28 91 5-1-3 17-12-12 3-1z" />
      <path d="M727 293l289-3v-4l17 8-17 8v-4z" />
    </g>
  </Marks>
);

export default function App() {
  return (
    <Desktop>
      <Global />
      <TopBars />
      <Workspace>
        <ComponentDock />
        <Main>
          <Bar $height={24}>
            <Grip />
            <ToolButton><Brush />删除</ToolButton>
            <Sep />
            <ToolButton><CopyShape />复制</ToolButton>
            <ToolButton><Mirror />镜像</ToolButton>
            <Sep />
            <ToolButton><Move />移动</ToolButton>
            <ToolButton><Rotate />旋转</ToolButton>
            <Sep />
          </Bar>
          <Bar $height={25} $gap={4}>
            <Grip />
            <ToolCombo width={56} value="首层" label="楼层" />
            <ToolCombo width={68} value="墙" label="构件类型" />
            <ToolCombo width={68} value="剪力墙" label="构件种类" />
            <ToolCombo width={69} value="JLQ-1" label="构件" />
          </Bar>
          <Bar $height={25}>
            <Grip />
            <ToolButton $pressed><Pointer />选择</ToolButton>
            <Tri />
            <Sep />
            <ToolButton><Diagonal />直线</ToolButton>
            <ToolButton><PointLen />点加长度</ToolButton>
            <ToolButton><Arc />三点画弧</ToolButton>
            <Tri />
          </Bar>
          <Canvas />
        </Main>
      </Workspace>
      <EditDialog />
      <PickDialog />
      <PropertyEditor />
      <Annotations />
    </Desktop>
  );
}
